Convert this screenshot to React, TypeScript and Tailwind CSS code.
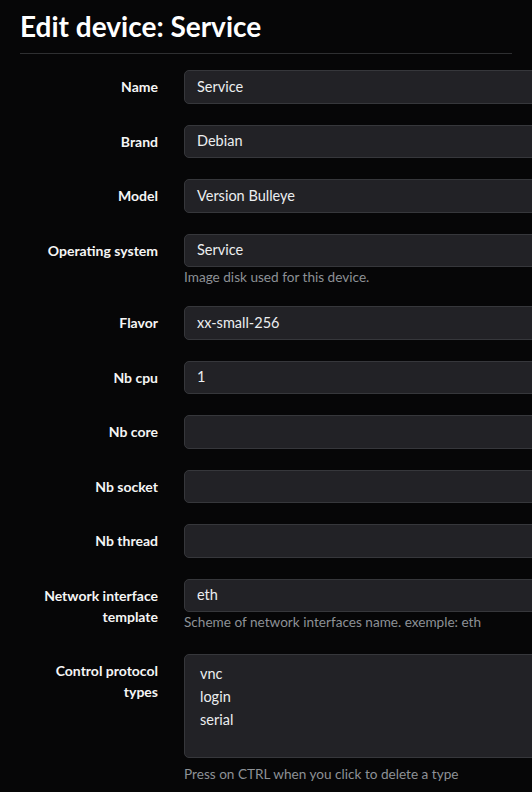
const fields: { label: string; value?: string; help?: string }[] = [
  { label: "Name", value: "Service" },
  { label: "Brand", value: "Debian" },
  { label: "Model", value: "Version Bulleye" },
  { label: "Operating system", value: "Service", help: "Image disk used for this device." },
  { label: "Flavor", value: "xx-small-256" },
  { label: "Nb cpu", value: "1" },
  { label: "Nb core" },
  { label: "Nb socket" },
  { label: "Nb thread" },
  { label: "Network interface template", value: "eth", help: "Scheme of network interfaces name. exemple: eth" },
];

const protocols = ["vnc", "login", "serial"];

function Label({ children }: { children: React.ReactNode }) {
  return (
    <label className="w-[152px] shrink-0 pl-3 pr-[14px] py-[6px] text-right text-[14px] font-bold leading-[21px] text-[#f5f5f5]">
      {children}
    </label>
  );
}

export default function App() {
  return (
    <div className="min-h-screen overflow-hidden bg-[#060607] px-5 font-['Lato',sans-serif] text-[#dee2e6]">
      <h1 className="pt-[6px] text-[28px] font-bold leading-[40px] text-white">Edit device: Service</h1>
      <hr className="mt-[7px] mb-4 border-t border-[#2e2f31]" />

      <form className="w-[600px]">
        {fields.map(f => (
          <div key={f.label} className="mb-[21px] flex">
            <Label>{f.label}</Label>
            <div className="flex-1 px-3">
              <div className="flex h-[33.5px] items-center rounded-[5px] border border-[#36373b] bg-[#222226] px-3 text-[14.5px] text-[#eceef0]">
                {f.value}
              </div>
              {f.help && <p className="mt-[3px] text-[13.6px] leading-[15px] text-[#8d9196]">{f.help}</p>}
            </div>
          </div>
        ))}

        <div className="flex">
          <Label>Control protocol types</Label>
          <div className="flex-1 px-3">
            <div className="h-[104px] rounded-[5px] border border-[#36373b] bg-[#222226] px-[15px] pt-[7px] text-[14.5px] leading-[23px] text-[#eceef0]">
              {protocols.map(p => <div key={p}>{p}</div>)}
            </div>
            <p className="mt-[9px] text-[13.6px] leading-[15px] text-[#8d9196]">Press on CTRL when you click to delete a type</p>
          </div>
        </div>
      </form>
    </div>
  );
}
